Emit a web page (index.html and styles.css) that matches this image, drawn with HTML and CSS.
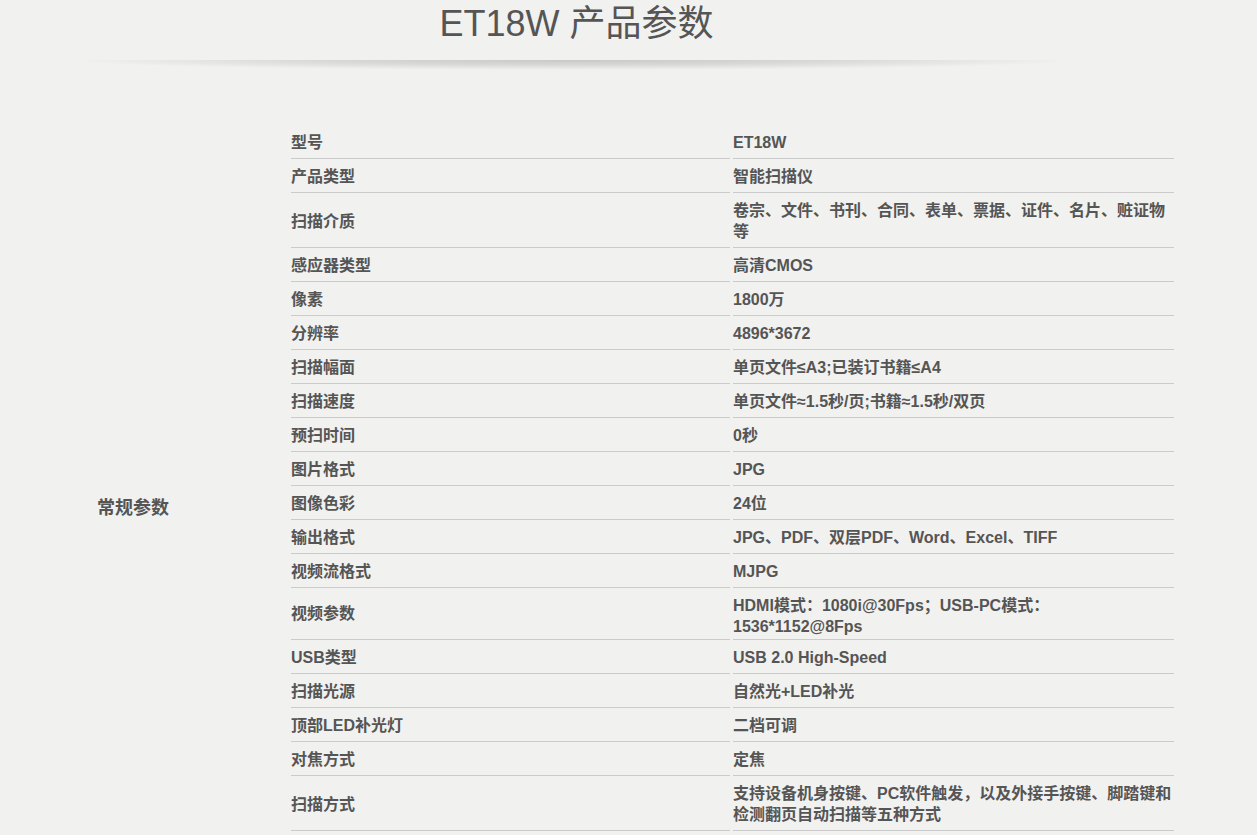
FILE: index.html
```html
<!DOCTYPE html>
<html lang="zh-CN">
<head>
<meta charset="utf-8">
<title>ET18W 产品参数</title>
<link rel="stylesheet" href="styles.css">
</head>
<body>
<div class="page">
  <header class="head">
    <h1 class="title">ET18W 产品参数</h1>
    <div class="shadow"></div>
  </header>
  <section class="specs">
    <div class="group">常规参数</div>
    <div class="rows">
      <div class="row"><div class="cell">型号</div><div class="cell">ET18W</div></div>
      <div class="row"><div class="cell">产品类型</div><div class="cell">智能扫描仪</div></div>
      <div class="row"><div class="cell">扫描介质</div><div class="cell">卷宗、文件、书刊、合同、表单、票据、证件、名片、赃证物等</div></div>
      <div class="row"><div class="cell">感应器类型</div><div class="cell">高清CMOS</div></div>
      <div class="row"><div class="cell">像素</div><div class="cell">1800万</div></div>
      <div class="row"><div class="cell">分辨率</div><div class="cell">4896*3672</div></div>
      <div class="row"><div class="cell">扫描幅面</div><div class="cell">单页文件≤A3;已装订书籍≤A4</div></div>
      <div class="row"><div class="cell">扫描速度</div><div class="cell">单页文件≈1.5秒/页;书籍≈1.5秒/双页</div></div>
      <div class="row"><div class="cell">预扫时间</div><div class="cell">0秒</div></div>
      <div class="row"><div class="cell">图片格式</div><div class="cell">JPG</div></div>
      <div class="row"><div class="cell">图像色彩</div><div class="cell">24位</div></div>
      <div class="row"><div class="cell">输出格式</div><div class="cell">JPG、PDF、双层PDF、Word、Excel、TIFF</div></div>
      <div class="row"><div class="cell">视频流格式</div><div class="cell">MJPG</div></div>
      <div class="row"><div class="cell tight">视频参数</div><div class="cell tight"><p class="text">HDMI模式<span class="punct">：</span>1080i@30Fps<span class="punct">；</span>USB-PC模式<span class="punct">：</span>1536*1152@8Fps</p></div></div>
      <div class="row"><div class="cell">USB类型</div><div class="cell">USB 2.0 High-Speed</div></div>
      <div class="row"><div class="cell">扫描光源</div><div class="cell">自然光+LED补光</div></div>
      <div class="row"><div class="cell">顶部LED补光灯</div><div class="cell">二档可调</div></div>
      <div class="row"><div class="cell">对焦方式</div><div class="cell">定焦</div></div>
      <div class="row"><div class="cell">扫描方式</div><div class="cell">支持设备机身按键、PC软件触发，以及外接手按键、脚踏键和检测翻页自动扫描等五种方式</div></div>
    </div>
  </section>
</div>
</body>
</html>
```

FILE: styles.css
```css
html, body {
  margin: 0;
  padding: 0;
  background: #f1f1ef;
}

body {
  font-family: "Liberation Sans", "Noto Sans CJK SC", sans-serif;
  color: #555555;
}

.page {
  padding-left: 90px;
}

.head {
  width: 973px;
}

.title {
  margin: 0;
  padding-top: 2px;
  font-size: 36px;
  line-height: 44px;
  font-weight: normal;
  text-align: center;
  color: #555555;
}

.shadow {
  margin-top: 14px;
  margin-left: -2px;
  width: 970px;
  height: 10px;
  background: radial-gradient(ellipse 52% 100% at 50% 0%, rgba(0, 0, 0, 0.17) 0%, rgba(0, 0, 0, 0.1) 50%, rgba(0, 0, 0, 0.03) 85%, rgba(0, 0, 0, 0) 100%);
}

.specs {
  display: flex;
  margin-top: 55px;
}

.group {
  width: 194px;
  padding-left: 7px;
  padding-top: 56px;
  display: flex;
  align-items: center;
  font-size: 18px;
  font-weight: bold;
}

.rows {
  width: 883px;
  display: flex;
  flex-direction: column;
}

.row {
  display: grid;
  grid-template-columns: 439px 441px;
  column-gap: 3px;
}

.cell {
  display: flex;
  align-items: center;
  padding: 7px 0 5px;
  border-bottom: 1px solid #cbcbcb;
  font-size: 16px;
  line-height: 21px;
  font-weight: bold;
}

.cell.tight {
  padding-bottom: 2px;
}

.cell.tight:first-child {
  padding-bottom: 5px;
  padding-top: 4px;
}

.text {
  margin: 0;
}

.punct {
  font-family: "Noto Sans CJK TC", sans-serif;
  line-height: 0;
}
```
